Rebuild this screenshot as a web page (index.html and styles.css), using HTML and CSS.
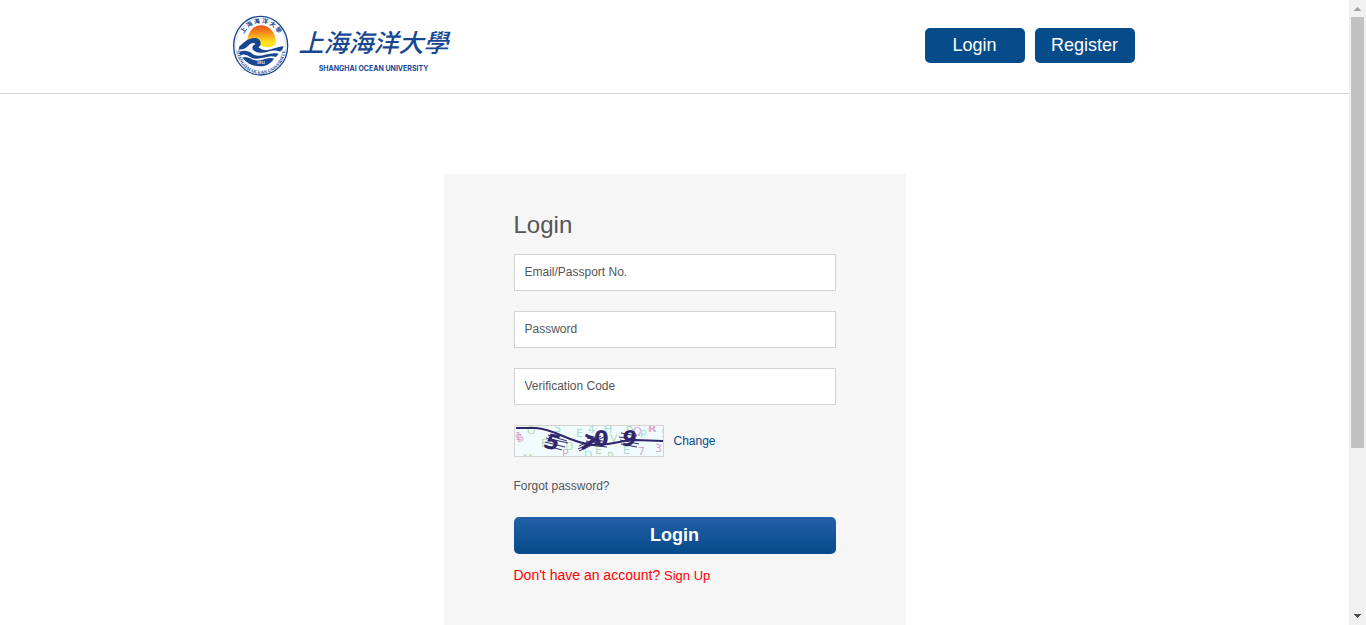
FILE: index.html
```html
<!DOCTYPE html>
<html lang="en">
<head>
<meta charset="utf-8">
<meta name="viewport" content="width=device-width, initial-scale=1">
<title>Login - Shanghai Ocean University</title>
<link rel="stylesheet" href="styles.css">
</head>
<body>
<div class="page">
  <header class="header">
    <div class="header-inner">
      <a class="brand" href="#">
        <svg class="emblem" viewBox="24 22 168 183" aria-hidden="true">
          <defs>
            <linearGradient id="sun" x1="0" y1="0" x2="0" y2="1">
              <stop offset="0" stop-color="#e8501e"/>
              <stop offset=".4" stop-color="#f8961d"/>
              <stop offset=".75" stop-color="#ffe21f"/>
            </linearGradient>
            <path id="arc-top" d="M50 104A58 58 0 0 1 166 104"/>
            <path id="arc-bottom" d="M34 119A74 80 0 0 0 182 119"/>
          </defs>
          <ellipse cx="107" cy="114" rx="81" ry="88" fill="#fff" stroke="#174793" stroke-width="4"/>
          <ellipse cx="107" cy="114" rx="75" ry="82" fill="none" stroke="#8ea8cf" stroke-width="1"/>
          <path d="M67 108C65 34 153 34 153 108Q130 128 105 112Q85 91 67 108Z" fill="url(#sun)"/>
          <path d="M43 116C57 105 65 92 89 91C109 91 112 112 100 119C125 139 145 118 176 116C174 124 170 129 165 132C139 121 122 141 96 134C77 128 79 113 92 109C79 101 72 113 65 119C58 125 47 126 41 126Z" fill="#174793"/>
          <path d="M43 132C59 127 70 130 82 138C105 156 128 130 161 138L153 148C125 139 103 165 74 147C63 140 53 139 46 143Z" fill="#174793"/>
          <path d="M52 150C67 144 76 155 91 158C113 162 125 145 147 153C138 168 122 176 106 176C83 176 65 167 52 150Z" fill="#174793"/>
          <text class="seal-year" x="108" y="170" text-anchor="middle">1912</text>
          <text class="seal-cn"><textPath href="#arc-top" startOffset="50%" text-anchor="middle">上 海 海 洋 大 學</textPath></text>
          <text class="seal-en"><textPath href="#arc-bottom" startOffset="50%" text-anchor="middle">SHANGHAI OCEAN UNIVERSITY</textPath></text>
        </svg>
        <span class="wordmark">
          <span class="wordmark-cn" lang="zh">上海海洋大學</span>
          <span class="wordmark-en">SHANGHAI OCEAN UNIVERSITY</span>
        </span>
      </a>
      <nav class="nav">
        <a class="nav-button" href="#login">Login</a>
        <a class="nav-button" href="#register">Register</a>
      </nav>
    </div>
  </header>
  <main class="main">
    <form class="panel" id="login">
      <h1 class="title">Login</h1>
      <input class="field" type="text" aria-label="Email/Passport No." placeholder="Email/Passport No.">
      <input class="field" type="password" aria-label="Password" placeholder="Password">
      <input class="field" type="text" aria-label="Verification Code" placeholder="Verification Code">
      <div class="captcha-row">
        <svg class="captcha" viewBox="1 1 148 30" role="img" aria-label="Verification image">
          <rect width="150" height="32" fill="#f1fbfd"/>
          <g class="noise">
            <g fill="#d5a9c9"><text x="4" y="18" transform="rotate(-25 4 18)">B</text><text x="119" y="10">Q</text><text x="124" y="30">7</text><text x="141" y="27">3</text><text x="48" y="32">P</text><text class="noise-bold" x="134" y="7">R</text><text x="1" y="15">1</text></g>
            <g fill="#b6dcb8"><text x="13" y="9">O</text><text x="27" y="22">E</text><text x="96" y="17">V</text><text x="112" y="5">R</text><text x="93" y="35">P</text><text x="51" y="25">D</text><text x="9" y="37">M</text><text x="81" y="29">E</text></g>
            <g fill="#a5ddd8"><text x="74" y="8">4</text><text x="62" y="12">E</text><text x="126" y="13">P</text><text x="109" y="29">E</text><text x="70" y="34">D</text><text x="40" y="7">S</text><text x="90" y="8">H</text><text x="147" y="12">5</text></g>
          </g>
          <path d="M34 10l19 6M32 13l22 5M31 17l20 5M30 20l18 5M65 21l22-10M64 24l26-12M65 26l22-10M72 10l12 3M73 13l20 4M72 16l20 3M74 20l19 2M107 8l16 3M105 12l20 3M106 15l19 4M107 19l16 3" fill="none" stroke="#30266d" stroke-width="1"/>
          <g class="digits" fill="#30266d">
            <text class="digit-slanted" x="31" y="25" transform="rotate(12 41 18)">5</text>
            <text x="66" y="26" transform="rotate(28 74 19)">7</text>
            <text x="80" y="21">0</text>
            <text class="digit-slanted" x="108" y="21">9</text>
          </g>
          <path d="M2 3H22C42 4 55 18 80 20C102 20 105 15 121 15L150 16" fill="none" stroke="#30266d" stroke-width="2"/>
        </svg>
        <a class="change" href="#change">Change</a>
      </div>
      <a class="forgot" href="#forgot">Forgot password?</a>
      <button class="submit" type="submit">Login</button>
      <p class="signup">Don't have an account? <a class="signup-link" href="#register">Sign Up</a></p>
    </form>
  </main>
</div>
<div class="scrollbar" aria-hidden="true">
  <svg class="arrow" viewBox="0 0 17 17"><path d="M8 7h1v1h1v1h1v1h1v1H5v-1h1V9h1V8h1z" fill="#a3a3a3"/></svg>
  <div class="track"><div class="thumb"></div></div>
  <svg class="arrow" viewBox="0 0 17 17"><path d="M5 6h7v1h-1v1h-1v1H9v1H8V9H7V8H6V7H5z" fill="#505050"/></svg>
</div>
</body>
</html>
```
FILE: styles.css
```css
* { box-sizing: border-box; }
body {
  margin: 0;
  height: 100vh;
  display: grid;
  grid-template-columns: 1fr 17px;
  overflow: hidden;
  background: #fff;
  color: #555;
  font: 12px/18px "Liberation Sans", Arial, "Noto Sans CJK SC", sans-serif;
}
a { color: inherit; text-decoration: none; }
.page { min-width: 0; overflow: hidden; }
.header { border-bottom: 1px solid #d6d6d6; }
.header-inner {
  max-width: 920px;
  margin: 0 auto;
  padding: 15px 0 17px;
  display: flex;
  justify-content: space-between;
  align-items: center;
}
.brand { display: flex; gap: 10px; padding-left: 18px; color: #174793; }
.emblem { width: 56px; height: 61px; }
.wordmark { display: flex; flex-direction: column; align-items: center; gap: 3px; padding-top: 6px; }
.wordmark-cn {
  font: italic 500 25px/40px "Noto Sans CJK TC", sans-serif;
}
.wordmark-en { font: bold 7px/10px Inter, "Liberation Sans", sans-serif; }
.seal-cn { font: bold 18px "Noto Sans CJK TC", sans-serif; fill: #174793; }
.seal-en { font: bold 14px "Liberation Serif", serif; fill: #174793; }
.seal-year { font: bold 12px "Liberation Serif", serif; fill: #fff; }
.nav { display: flex; gap: 10px; }
.nav-button {
  width: 100px;
  height: 35px;
  border-radius: 5px;
  background: #064b8a;
  color: #fff;
  font-size: 18px;
  line-height: 34px;
  text-align: center;
}
.main { padding: 80px 20px; }
.panel {
  max-width: 462px;
  margin: 0 auto;
  padding: 36px 70px 70px;
  background: #f6f6f6;
  display: flex;
  flex-direction: column;
}
.title { margin: 0 0 14px; font-size: 24px; font-weight: normal; line-height: 30px; }
.field {
  width: 100%;
  height: 37px;
  margin: 0 0 20px;
  padding: 0 10px 2px;
  border: 1px solid #d3d3d3;
  border-radius: 0;
  background: #fff;
  color: #555;
  font: inherit;
}
.field::placeholder { color: #555; opacity: 1; }
.captcha-row { display: flex; align-items: center; gap: 10px; margin-bottom: 20px; }
.captcha { width: 150px; height: 32px; border: 1px solid #d3d3d3; }
.noise { font: 11px "DejaVu Sans", sans-serif; }
.noise-bold { font-weight: bold; }
.digits { font: bold 21px "DejaVu Sans", sans-serif; }
.digit-slanted { font-style: italic; }
.change { color: #064b8a; }
.forgot { align-self: flex-start; margin-bottom: 22px; }
.submit {
  height: 37px;
  padding: 0 0 1px;
  border: 0;
  border-radius: 5px;
  background: linear-gradient(#235fa8, #064b8a);
  color: #fff;
  font: bold 18px "Liberation Sans", Arial, sans-serif;
}
.signup { margin: 11px 0 0; color: #f00; font-size: 14px; line-height: 20px; }
.signup-link { font-size: 13px; }
.scrollbar { display: flex; flex-direction: column; background: #f1f1f1; }
.arrow { width: 17px; height: 17px; }
.track { flex: 1; padding: 0 2px; }
.thumb { height: 73%; background: #c1c1c1; }
```
